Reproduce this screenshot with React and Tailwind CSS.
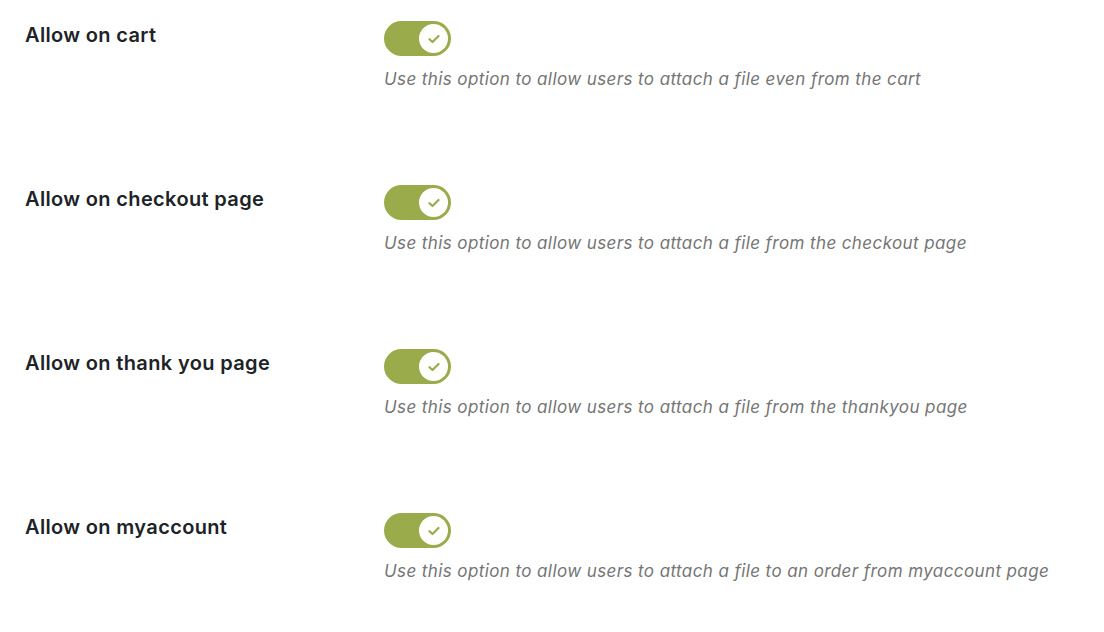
const rows = [
  { label: "Allow on cart", desc: "Use this option to allow users to attach a file even from the cart" },
  { label: "Allow on checkout page", desc: "Use this option to allow users to attach a file from the checkout page" },
  { label: "Allow on thank you page", desc: "Use this option to allow users to attach a file from the thankyou page" },
  { label: "Allow on myaccount", desc: "Use this option to allow users to attach a file to an order from myaccount page" },
];

function Toggle() {
  return (
    <div className="w-[67px] h-[35px] rounded-full bg-[#9aab4b] flex items-center justify-end pr-[3px]">
      <div className="w-[29px] h-[29px] rounded-full bg-white flex items-center justify-center">
        <svg width="12" height="10" viewBox="0 0 12 10" fill="none">
          <path d="M1.5 5.2 L4.5 8 L10.5 2" stroke="#9aab4b" strokeWidth="2.2" strokeLinecap="round" strokeLinejoin="round" />
        </svg>
      </div>
    </div>
  );
}

export default function App() {
  return (
    <div className="w-[1104px] h-[632px] bg-white font-['Inter',sans-serif] pl-[25px] pt-[21px] overflow-hidden">
      {rows.map((r) => (
        <div key={r.label} className="flex h-[164px]">
          <div className="w-[359px] text-[20px] font-semibold text-[#1d2327] leading-[28px] tracking-[0.35px]">
            {r.label}
          </div>
          <div className="flex flex-col">
            <Toggle />
            <p className="mt-[11px] text-[17px] italic text-[#757575] leading-[24px] tracking-[0.4px]">{r.desc}</p>
          </div>
        </div>
      ))}
    </div>
  );
}
